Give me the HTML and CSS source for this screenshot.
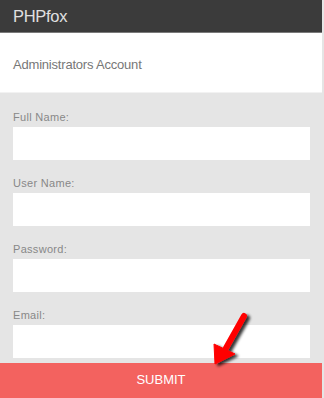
FILE: index.html
```html
<!DOCTYPE html>
<html lang="en">
<head>
    <meta charset="UTF-8">
    <meta name="viewport" content="width=device-width, initial-scale=1.0">
    <title>PHPfox Install</title>
    <link rel="stylesheet" href="styles.css">
</head>
<body>
    <div class="page">
        <div class="header">PHPfox</div>

        <div class="title-box">Administrators Account</div>

        <form class="install-form">
            <div class="field">
                <label for="full-name">Full Name:</label>
                <input type="text" id="full-name" class="input-field">
            </div>
            <div class="field">
                <label for="user-name">User Name:</label>
                <input type="text" id="user-name" class="input-field">
            </div>
            <div class="field">
                <label for="password">Password:</label>
                <input type="password" id="password" class="input-field">
            </div>
            <div class="field">
                <label for="email">Email:</label>
                <input type="text" id="email" class="input-field">
            </div>
        </form>

        <button class="submit-button">SUBMIT</button>

        <!-- pointer drawn over the form -->
        <svg class="pointer" width="60" height="70" viewBox="200 305 60 70">
            <defs>
                <filter id="shadow" x="-50%" y="-50%" width="200%" height="200%">
                    <feGaussianBlur in="SourceAlpha" stdDeviation="1.5"/>
                    <feOffset dx="3" dy="2" result="blur"/>
                    <feComponentTransfer><feFuncA type="linear" slope="0.8"/></feComponentTransfer>
                    <feMerge><feMergeNode/><feMergeNode in="SourceGraphic"/></feMerge>
                </filter>
            </defs>
            <g filter="url(#shadow)" fill="#ff0000" stroke="#ff0000">
                <line x1="244" y1="316" x2="226" y2="348" stroke-width="6" stroke-linecap="round"/>
                <polygon points="214,344 235,354 215,364" stroke-width="1" stroke-linejoin="round"/>
            </g>
        </svg>
    </div>
</body>
</html>
```

FILE: styles.css
```css
body {
    font-family: "Liberation Sans", Arial, sans-serif;
    margin: 0;
    padding: 0;
    background-color: #e5e5e5;
}
.page {
    position: relative;
    width: 322px;
    height: 398px;
    overflow: hidden;
    background-color: #e5e5e5;
}
.header {
    height: 32px;
    line-height: 33px;
    padding: 0 13px;
    background-color: #3b3b3b;
    border-bottom: 1px solid #7a7a7a;
    color: #e0e0e0;
    font-size: 16.5px;
    letter-spacing: -0.3px;
}
.title-box {
    height: 55px;
    line-height: 55px;
    padding: 4px 13px 0 13px;
    background-color: white;
    border-bottom: 1px solid #f2f2f2;
    color: #777;
    font-size: 13px;
    letter-spacing: -0.2px;
}
.install-form {
    padding: 17px 13px 0 13px;
}
.field {
    margin-bottom: 16px;
}
.field:last-child {
    margin-bottom: 5px;
}
.field label {
    display: block;
    height: 14px;
    line-height: 14px;
    margin-bottom: 3px;
    color: #888;
    font-size: 11px;
    letter-spacing: 0.3px;
}
.input-field {
    display: block;
    box-sizing: border-box;
    width: 297px;
    height: 33px;
    margin: 0;
    border: none;
    background-color: white;
}
.submit-button {
    display: block;
    width: 322px;
    height: 35px;
    border: none;
    background-color: #f3625f;
    color: white;
    font-family: "Liberation Sans", Arial, sans-serif;
    font-size: 13px;
    padding: 0 0 3px 0;
}
.pointer {
    position: absolute;
    left: 200px;
    top: 305px;
}
```
